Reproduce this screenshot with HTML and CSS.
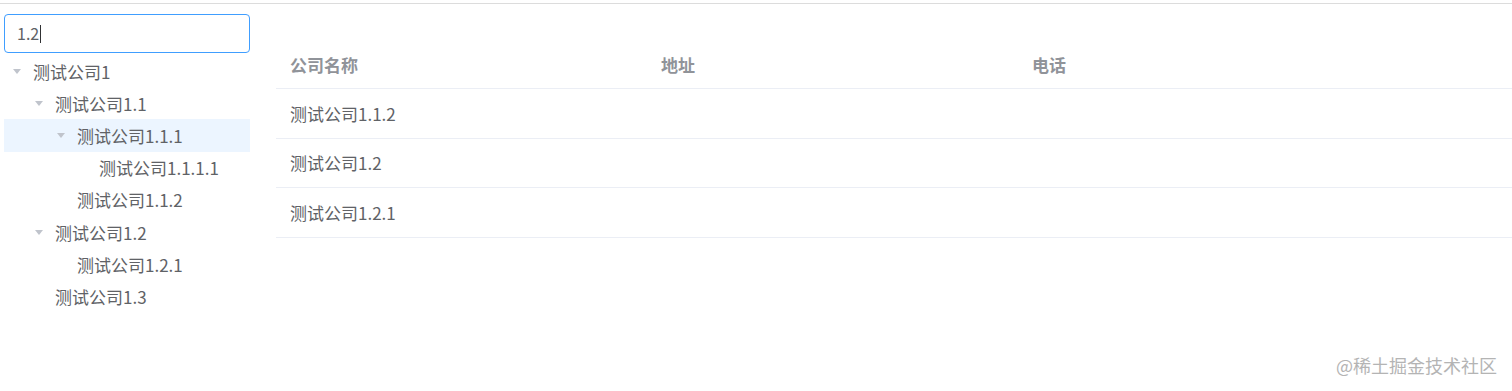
FILE: index.html
```html
<!DOCTYPE HTML>
<html>
	<head>
		<meta charset='utf-8' />
		<title>公司树</title>
		<link rel="stylesheet" href="styles.css">
	</head>
	<body>
		<div class='page'>
			<div class='side'>
				<div class='search'>1.2<span class='caret'></span></div>
				<ul class='tree'>
					<li class='node lv0'><i class='arrow'></i>测试公司1</li>
					<li class='node lv1'><i class='arrow'></i>测试公司1.1</li>
					<li class='node lv2 current'><i class='arrow'></i>测试公司1.1.1</li>
					<li class='node lv3'><i class='leaf'></i>测试公司1.1.1.1</li>
					<li class='node lv2'><i class='leaf'></i>测试公司1.1.2</li>
					<li class='node lv1'><i class='arrow'></i>测试公司1.2</li>
					<li class='node lv2'><i class='leaf'></i>测试公司1.2.1</li>
					<li class='node lv1'><i class='leaf'></i>测试公司1.3</li>
				</ul>
			</div>
			<div class='main'>
				<table class='grid'>
					<thead>
						<tr><th>公司名称</th><th>地址</th><th>电话</th><th></th></tr>
					</thead>
					<tbody>
						<tr><td>测试公司1.1.2</td><td></td><td></td><td></td></tr>
						<tr><td>测试公司1.2</td><td></td><td></td><td></td></tr>
						<tr><td>测试公司1.2.1</td><td></td><td></td><td></td></tr>
					</tbody>
				</table>
			</div>
		</div>
		<div class='mark'>@稀土掘金技术社区</div>
	</body>
</html>
```

FILE: styles.css
```css
body,p{margin:0;}
ul,li{margin:0;padding:0;list-style: none;}
body{
	font-family: "Noto Sans CJK SC", "Noto Sans", sans-serif;
	font-size: 17px;
	color: #606266;
	background: #fff;
	height: 391px;
	position: relative;
	overflow: hidden;
}
.page{
	display: flex;
	margin-top: 3px;
	border-top: 1px solid #dcdcdc;
	padding: 10px 0 0 4px;
	gap: 26px;
}
.side{
	width: 246px;
	flex: none;
}
.search{
	box-sizing: border-box;
	height: 39px;
	border: 1px solid #409eff;
	border-radius: 4px;
	padding: 0 12px;
	line-height: 37px;
	font-size: 16px;
	color: #606266;
	display: flex;
	align-items: center;
}
.caret{
	display: inline-block;
	width: 1px;
	height: 18px;
	background: #303133;
	margin-left: 1px;
}
.tree{
	margin-top: 2px;
}
.node{
	display: flex;
	align-items: center;
	height: 32.2px;
	color: #606266;
	white-space: nowrap;
}
.node.current{
	background: #ecf5ff;
}
.lv0{padding-left: 4px;}
.lv1{padding-left: 26px;}
.lv2{padding-left: 48px;}
.lv3{padding-left: 70px;}
.arrow{
	display: inline-block;
	flex: none;
	width: 0;
	height: 0;
	margin-left: 5px;
	margin-right: 12px;
	border-left: 4px solid transparent;
	border-right: 4px solid transparent;
	border-top: 5px solid #c0c4cc;
}
.leaf{
	display: inline-block;
	flex: none;
	width: 25px;
	height: 1px;
}
.main{
	flex: 1;
	padding-top: 27px;
}
.grid{
	width: 100%;
	border-collapse: collapse;
	table-layout: fixed;
}
.grid th, .grid td{
	text-align: left;
	padding: 0 14px;
	border-bottom: 1px solid #ebeef5;
	width: 343px;
}
.grid th:last-child, .grid td:last-child{
	width: auto;
}
.grid th{
	height: 47px;
	font-weight: bold;
	color: #909399;
}
.grid td{
	height: 48.5px;
}
.mark{
	position: absolute;
	right: 15px;
	bottom: 13px;
	color: #b4b4b4;
	font-size: 18px;
}
```
